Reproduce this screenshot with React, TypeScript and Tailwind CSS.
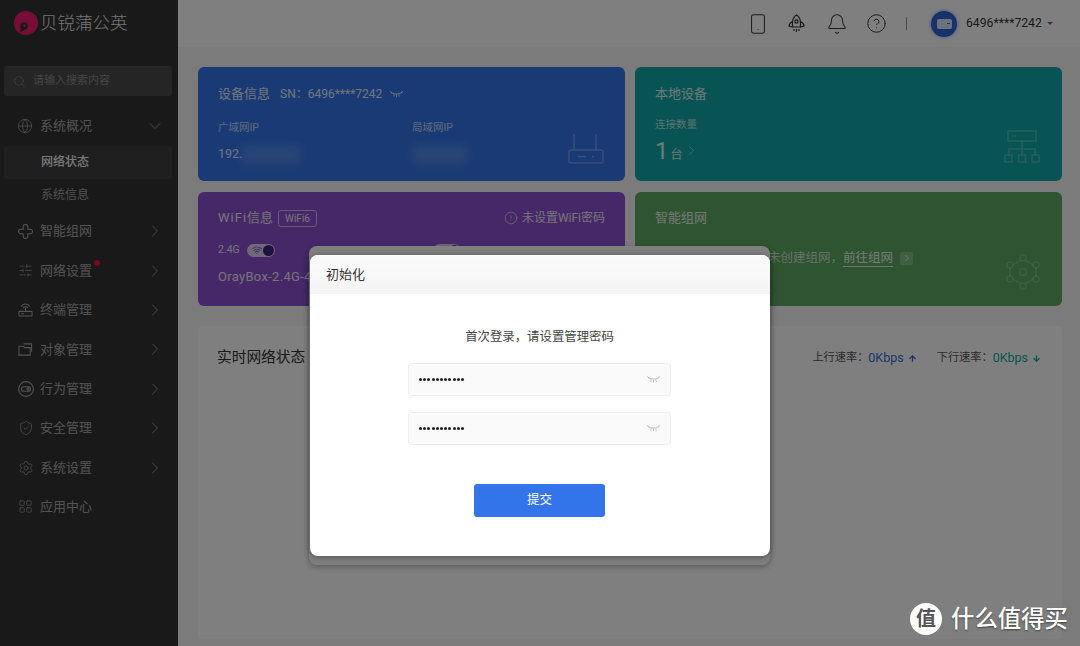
import { ArrowDown, ArrowUp, Bell, ChevronDown, ChevronRight, CircleAlert, CircleHelp, Globe, LayoutGrid, Search, Settings, ShieldCheck, SlidersHorizontal, Smartphone, Wifi } from "lucide-react";
import type { ReactNode } from "react";

const font = "font-['Roboto','Noto_Sans_CJK_SC',sans-serif]";

function EyeClosed({ className }: { className?: string }) {
  return (
    <svg className={className} viewBox="0 0 16 10" fill="none" stroke="currentColor" strokeWidth={1}>
      <path d="M1.500 2.500C4 5 12 5 14.500 2.500M1 1l2 2.500M15 1l-2 2.500M5.500 4.500L5 7.500M10.500 4.500L11 7.500M8 5v3" />
    </svg>
  );
}

function MeshIcon() {
  return (
    <svg className="w-[15px] h-[15px]" viewBox="0 0 16 16" fill="none" stroke="currentColor" strokeWidth={1.100}>
      <path d="M5.500 5.500V3a2.500 2.500 0 0 1 5 0v2.500H13a2.500 2.500 0 0 1 0 5h-2.500V13a2.500 2.500 0 0 1-5 0v-2.500H3a2.500 2.500 0 0 1 0-5z" />
    </svg>
  );
}

function TerminalIcon() {
  return (
    <svg className="w-[15px] h-[15px]" viewBox="0 0 16 16" fill="none" stroke="currentColor" strokeWidth={1.100}>
      <rect x="1" y="10" width="14" height="5" rx="1" />
      <path d="M8 10V6M3.500 5a5 5 0 0 1 9 0M5.500 6.500a3 3 0 0 1 5 0M3.500 12.500h3" />
    </svg>
  );
}

function FolderIcon() {
  return (
    <svg className="w-[15px] h-[15px]" viewBox="0 0 16 16" fill="none" stroke="currentColor" strokeWidth={1.100}>
      <path d="M1 4.500h4.500l1.500 1.500h6v8H1zM6 2h8.500v8.500" />
    </svg>
  );
}

function BehaviorIcon() {
  return (
    <svg className="w-[16px] h-[16px]" viewBox="0 0 16 16" fill="none" stroke="currentColor" strokeWidth={1.100}>
      <circle cx="8" cy="8" r="7.400" />
      <rect x="3.500" y="5.700" width="9" height="4.600" rx="2.300" />
      <circle cx="10" cy="8" r="1.100" />
    </svg>
  );
}

function RocketIcon() {
  return (
    <svg className="w-[17px] h-[19px]" viewBox="0 0 17 19" fill="none" stroke="currentColor" strokeWidth={1.200}>
      <path d="M8.500 1C5.500 3 4.500 6 4.500 8.500v4.500h8V8.500C12.500 6 11.500 3 8.500 1z" />
      <circle cx="8.500" cy="7.500" r="1.600" />
      <path d="M4.500 7.500C2.500 8.500 1 10 1 12l3.500 1M12.500 7.500c2 1 3.500 2.500 3.500 4.500l-3.500 1M6 15v2M8.500 15v3M11 15v2" />
    </svg>
  );
}

function RouterIcon() {
  return (
    <svg className="w-[36px] h-[31px]" viewBox="0 0 36 31" fill="none" stroke="currentColor" strokeWidth={1.500}>
      <rect x="1" y="17" width="34" height="13" rx="2" />
      <path d="M6 17V1M28 17V1M10 23.500h8M24 23.500h2" />
    </svg>
  );
}

function TopologyIcon() {
  return (
    <svg className="w-[36px] h-[33px]" viewBox="0 0 36 33" fill="none" stroke="currentColor" strokeWidth={1.500}>
      <rect x="4" y="1" width="28" height="10" />
      <path d="M8 6h4M18 11v14M5 25v-6h26v6" />
      <rect x="1" y="25" width="7" height="7" />
      <rect x="14.500" y="25" width="7" height="7" />
      <rect x="28" y="25" width="7" height="7" />
    </svg>
  );
}

function HexNetIcon() {
  return (
    <svg className="w-[34px] h-[36px]" viewBox="0 0 34 36" fill="none" stroke="currentColor" strokeWidth={1.500}>
      <path d="M17 5L30 12.500V23.500L17 31L4 23.500V12.500z" />
      <circle cx="17" cy="18" r="3.500" />
      <circle cx="17" cy="4" r="3" fill="#5da862" />
      <circle cx="17" cy="32" r="3" fill="#5da862" />
      <circle cx="4" cy="11" r="3" fill="#5da862" />
      <circle cx="30" cy="11" r="3" fill="#5da862" />
      <circle cx="4" cy="25" r="3" fill="#5da862" />
      <circle cx="30" cy="25" r="3" fill="#5da862" />
    </svg>
  );
}

function Toggle() {
  return (
    <span className="w-[28px] h-[13px] rounded-full bg-white/75 flex items-center justify-between pl-[5px] pr-[1px]">
      <Wifi className="w-[10px] h-[10px] text-[#8d50d0]" strokeWidth={2.500} />
      <span className="w-[11px] h-[11px] rounded-full bg-[#3a2480]" />
    </span>
  );
}

function MenuItem({ icon, label, dot, last }: { icon: ReactNode; label: string; dot?: boolean; last?: boolean }) {
  return (
    <div className="h-[39.400px] flex items-center pl-[17px] pr-[13px] text-[13px] text-[#a6a6a6]">
      <span className="w-[17px] flex justify-center">{icon}</span>
      <span className="ml-[6px] relative">
        {label}
        {dot && <span className="absolute -top-[1px] -right-[8px] w-[6px] h-[6px] rounded-full bg-[#f0163a]" />}
      </span>
      {!last && <ChevronRight className="ml-auto w-[20px] h-[20px]" strokeWidth={1} />}
    </div>
  );
}

function Sidebar() {
  return (
    <aside className="w-[178px] h-full shrink-0 bg-[#333333] flex flex-col">
      <div className="h-[66px] flex items-center pl-[14px] pb-[26px] pt-[6px]">
        <svg className="w-[24px] h-[24px]" viewBox="0 0 24 24">
          <circle cx="12" cy="12" r="12" fill="#f01a70" />
          <circle cx="10" cy="15" r="3.800" fill="#333333" />
          <path d="M7 16.500L6 21.500L11 18.500z" fill="#333333" />
          <circle cx="10.500" cy="14.500" r="1.200" fill="#f01a70" />
        </svg>
        <span className="ml-[2px] text-[17.500px] text-[#e6e6e6] font-light">贝锐蒲公英</span>
      </div>
      <div className="ml-[4px] w-[168px] h-[30px] rounded-[3px] bg-[#4b4b4b] flex items-center pl-[9px] text-[11px] text-[#8c8c8c]">
        <Search className="w-[13px] h-[13px]" strokeWidth={1.300} />
        <span className="ml-[7px]">请输入搜索内容</span>
      </div>
      <div className="mt-[10px]">
        <div className="h-[40px] flex items-center pl-[17px] pr-[13px] text-[13px] text-[#a6a6a6]">
          <Globe className="w-[16px] h-[16px]" strokeWidth={1.100} />
          <span className="ml-[7px]">系统概况</span>
          <ChevronDown className="ml-auto w-[20px] h-[20px]" strokeWidth={1} />
        </div>
        <div className="ml-[4px] w-[168px] h-[32.500px] rounded-[3px] bg-[#3f3f3f] flex items-center pl-[37px] text-[12px] text-[#f0f0f0] font-medium">网络状态</div>
        <div className="h-[33px] flex items-center pl-[41px] text-[12px] text-[#a0a0a0]">系统信息</div>
        <MenuItem icon={<MeshIcon />} label="智能组网" />
        <MenuItem icon={<SlidersHorizontal className="w-[15px] h-[15px]" strokeWidth={1.100} />} label="网络设置" dot />
        <MenuItem icon={<TerminalIcon />} label="终端管理" />
        <MenuItem icon={<FolderIcon />} label="对象管理" />
        <MenuItem icon={<BehaviorIcon />} label="行为管理" />
        <MenuItem icon={<ShieldCheck className="w-[16px] h-[16px]" strokeWidth={1.100} />} label="安全管理" />
        <MenuItem icon={<Settings className="w-[16px] h-[16px]" strokeWidth={1.100} />} label="系统设置" />
        <MenuItem icon={<LayoutGrid className="w-[15px] h-[15px]" strokeWidth={1.100} />} label="应用中心" last />
      </div>
    </aside>
  );
}

function Header() {
  return (
    <header className="h-[47px] bg-white flex items-center pl-[569px] text-[#333333]">
      <Smartphone className="w-[22px] h-[22px]" strokeWidth={1.100} />
      <span className="ml-[18.500px]"><RocketIcon /></span>
      <Bell className="ml-[21.500px] w-[22px] h-[22px]" strokeWidth={1.100} />
      <CircleHelp className="ml-[17.500px] w-[21px] h-[21px]" strokeWidth={1.100} />
      <span className="ml-[19.500px] w-px h-[13px] bg-[#999999]" />
      <span className="ml-[24px] w-[26px] h-[26px] rounded-full bg-[#2f62d6] flex items-center justify-center shadow-[0_0_4px_rgba(47,98,214,0.6)]">
        <span className="w-[15px] h-[10px] rounded-[2px] bg-[#d9e4fb] flex items-center justify-end pr-[2px]">
          <span className="w-[3px] h-[1px] bg-[#2f62d6]" />
        </span>
      </span>
      <span className="ml-[9px] text-[12.200px]">6496****7242</span>
      <span className="ml-[5px] border-x-[3px] border-x-transparent border-t-[3px] border-t-[#666666]" />
    </header>
  );
}

function InfoCards() {
  return (
    <div className="grid grid-cols-2 gap-x-[10px] gap-y-[11px]">
      <section className="relative h-[114px] rounded-[6px] bg-[#3474ea] px-[20px] pt-[17px] text-white/85 overflow-hidden">
        <div className="flex items-center text-[13px] leading-[20px]">
          <span>设备信息</span>
          <span className="ml-[10px] text-[12px]">SN：6496****7242</span>
          <EyeClosed className="ml-[7px] w-[15px] h-[9px]" />
        </div>
        <div className="mt-[16px] flex text-[10.500px] text-white/70">
          <span className="w-[194px]">广域网IP</span>
          <span>局域网IP</span>
        </div>
        <div className="mt-[9px] flex text-[12.500px] items-center h-[20px]">
          <span className="w-[23px]">192.</span>
          <span className="w-[60px] h-[20px] bg-white/15 blur-[4px]" />
          <span className="ml-[111px] w-[56px] h-[20px] bg-white/15 blur-[4px]" />
        </div>
        <span className="absolute right-[21px] bottom-[17px] text-white/30"><RouterIcon /></span>
      </section>

      <section className="relative h-[114px] rounded-[6px] bg-[#10a8a8] px-[20px] pt-[17px] text-white/85 overflow-hidden">
        <div className="text-[13px] leading-[20px]">本地设备</div>
        <div className="mt-[13px] text-[10.500px] text-white/70">连接数量</div>
        <div className="mt-[3px] flex items-baseline">
          <span className="text-[24px] leading-[30px]">1</span>
          <span className="ml-[2px] text-[12px]">台</span>
          <ChevronRight className="ml-[1px] w-[15px] h-[15px] self-center text-white/70" strokeWidth={1.100} />
        </div>
        <span className="absolute right-[22px] bottom-[18px] text-white/25"><TopologyIcon /></span>
      </section>

      <section className="relative h-[114px] rounded-[6px] bg-[#8d50d0] px-[20px] pt-[16px] text-white/85 overflow-hidden">
        <div className="flex items-center text-[13px] leading-[20px]">
          <span><span className="tracking-[1px]">WiFi</span>信息</span>
          <span className="ml-[5px] h-[17px] px-[6px] border border-white/60 rounded-[3px] text-[10px] leading-[15px]">WiFi6</span>
          <span className="ml-auto flex items-center text-[12px]">
            <CircleAlert className="w-[14px] h-[14px] mr-[4px]" strokeWidth={1.100} />
            未设置WiFi密码
          </span>
        </div>
        <div className="mt-[14px] flex items-center text-[10.500px] h-[16px]">
          <span className="w-[29px]">2.4G</span>
          <Toggle />
          <span className="ml-[158px]"><Toggle /></span>
        </div>
        <div className="mt-[9px] text-[13px] leading-[20px] tracking-[0.3px]">OrayBox-2.4G-4</div>
      </section>

      <section className="relative h-[114px] rounded-[6px] bg-[#5da862] px-[20px] pt-[16px] text-white/85 overflow-hidden">
        <div className="text-[13px] leading-[20px]">智能组网</div>
        <div className="mt-[21px] pl-[113px] flex items-center text-[12.500px] text-white/70">
          <span>未创建组网，</span>
          <span className="text-white/90 border-b border-white/80 leading-[16px]">前往组网</span>
          <span className="ml-[7px] w-[13px] h-[13px] rounded-[2px] bg-white/25 flex items-center justify-center">
            <ChevronRight className="w-[10px] h-[10px]" strokeWidth={2.500} />
          </span>
        </div>
        <span className="absolute right-[22px] bottom-[16px] text-white/20"><HexNetIcon /></span>
      </section>
    </div>
  );
}

function Realtime() {
  return (
    <section className="mt-[20px] h-[313px] bg-white rounded-[4px] pl-[19px] pr-[21px] pt-[20px] flex items-start justify-between">
      <h2 className="text-[14.700px] leading-[22px] text-[#333333] font-normal">实时网络状态</h2>
      <div className="flex gap-[20px] text-[11.200px] leading-[22px] pt-[1px] text-[#555555]">
        <span className="flex items-center">上行速率：<span className="text-[#3d64d8] text-[12.500px]">0Kbps</span><ArrowUp className="ml-[4px] w-[9px] h-[9px] text-[#3d64d8]" strokeWidth={3.500} /></span>
        <span className="flex items-center">下行速率：<span className="text-[#10a8a0] text-[12.500px]">0Kbps</span><ArrowDown className="ml-[4px] w-[9px] h-[9px] text-[#10a8a0]" strokeWidth={3.500} /></span>
      </div>
    </section>
  );
}

function PasswordField() {
  return (
    <div className="h-[33px] rounded-[3px] border border-[#efefef] bg-[#fafafa] flex items-center pl-[10px] pr-[9px]">
      <span className="flex gap-[1.200px]">
        {Array.from({ length: 11 }).map((_, i) => (
          <span key={i} className="w-[3px] h-[3px] rounded-full bg-[#222222]" />
        ))}
      </span>
      <EyeClosed className="ml-auto w-[15px] h-[9px] text-[#bbbbbb]" />
    </div>
  );
}

function InitDialog() {
  return (
    <div className="absolute left-[310px] top-[255px] w-[460px] h-[301px] rounded-[8px] bg-white overflow-hidden shadow-[0_1px_6px_rgba(0,0,0,0.35)]">
      <div className="h-[39px] bg-gradient-to-b from-[#fbfbfb] to-[#f4f4f4] pl-[16px] flex items-center text-[13px] text-[#333333]">初始化</div>
      <div className="flex flex-col items-center pr-[1px]">
        <p className="mt-[33px] text-[12.400px] leading-[20px] text-[#444444]">首次登录，请设置管理密码</p>
        <div className="mt-[16px] w-[263px] flex flex-col gap-[16px]">
          <PasswordField />
          <PasswordField />
        </div>
        <button className="mt-[39px] w-[131px] h-[33px] rounded-[3px] bg-[#3474ea] text-white text-[12.500px]">提交</button>
      </div>
    </div>
  );
}

export default function App() {
  return (
    <div className={`relative w-[1080px] h-[646px] overflow-hidden flex bg-[#f6f6f6] ${font}`}>
      <Sidebar />
      <main className="flex-1">
        <Header />
        <div className="pt-[20px] pl-[20px] pr-[18px]">
          <InfoCards />
          <Realtime />
        </div>
      </main>
      {/* modal underneath the init dialog, dimmed with the page */}
      <div className="absolute left-[309px] top-[246px] w-[461px] h-[319px] rounded-[8px] bg-white shadow-[0_2px_6px_rgba(0,0,0,0.3)]" />
      <div className="absolute inset-0 bg-black/50" />
      <InitDialog />
      <div className="absolute left-[910px] top-[603px] flex items-center">
        <span className="w-[32px] h-[32px] rounded-full bg-white flex items-center justify-center text-[20px] font-bold text-[#555555]">值</span>
        <span className="ml-[9px] text-[23.400px] leading-[32px] font-medium text-white [text-shadow:0_1px_2px_rgba(0,0,0,0.5)]">什么值得买</span>
      </div>
    </div>
  );
}
